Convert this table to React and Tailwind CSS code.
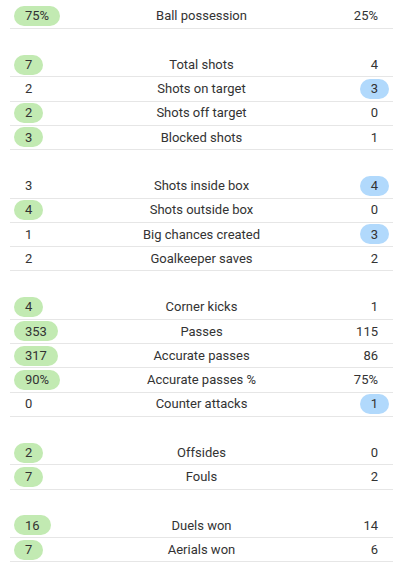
import React from "react";

const groups = [
  [["75%", "Ball possession", "25%", "h"]],
  [
    ["7", "Total shots", "4", "h"],
    ["2", "Shots on target", "3", "a"],
    ["2", "Shots off target", "0", "h"],
    ["3", "Blocked shots", "1", "h"],
  ],
  [
    ["3", "Shots inside box", "4", "a"],
    ["4", "Shots outside box", "0", "h"],
    ["1", "Big chances created", "3", "a"],
    ["2", "Goalkeeper saves", "2", ""],
  ],
  [
    ["4", "Corner kicks", "1", "h"],
    ["353", "Passes", "115", "h"],
    ["317", "Accurate passes", "86", "h"],
    ["90%", "Accurate passes %", "75%", "h"],
    ["0", "Counter attacks", "1", "a"],
  ],
  [
    ["2", "Offsides", "0", "h"],
    ["7", "Fouls", "2", "h"],
  ],
  [
    ["16", "Duels won", "14", "h"],
    ["7", "Aerials won", "6", "h"],
  ],
];

const Pill = ({ value, on, color }) => (
  <span
    className={
      "inline-flex h-[20px] items-center rounded-full px-[11px] " +
      (on ? color : "bg-transparent")
    }
  >
    {value}
  </span>
);

const App = () => {
  return (
    <div
      className="w-[400px] h-[566px] bg-white pt-[4.5px] px-[10px] text-[13px] text-[#333]"
      style={{ fontFamily: "Roboto, 'Liberation Sans', sans-serif" }}
    >
      <div className="w-[383px] flex flex-col gap-[24.25px]">
        {groups.map((rows, gi) => (
          <div key={gi}>
            {rows.map(([home, label, away, win]) => (
              <div
                key={label}
                className="h-[24.25px] grid grid-cols-[1fr_auto_1fr] items-center border-b border-[#e6e6e6] px-[4px]"
              >
                <div className="flex justify-start">
                  <Pill value={home} on={win === "h"} color="bg-[#c2eab2]" />
                </div>
                <div className="text-center">{label}</div>
                <div className="flex justify-end">
                  <Pill value={away} on={win === "a"} color="bg-[#b1d9fc]" />
                </div>
              </div>
            ))}
          </div>
        ))}
      </div>
    </div>
  );
};

export default App;
